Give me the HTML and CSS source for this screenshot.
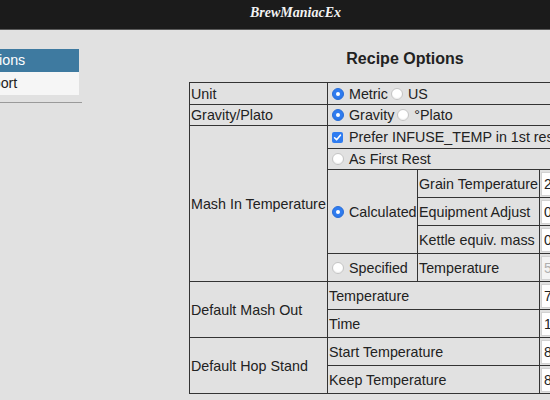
FILE: index.html
```html
<!DOCTYPE html>
<html>
<head>
<meta charset="utf-8">
<link rel="stylesheet" href="styles.css">
</head>
<body>
<header class="topbar"><span class="brand">BrewManiacEx</span></header>
<div class="main">
  <nav class="sidebar">
    <div class="menu-item active">Options</div>
    <div class="menu-item">Export</div>
  </nav>
  <section class="content">
    <h2 class="title">Recipe Options</h2>
    <table class="opts">
      <colgroup><col class="c1"><col class="c2"><col class="c3"><col class="c4"></colgroup>
      <tr class="t1"><td>Unit</td><td colspan="3"><span class="radio on"></span>Metric<span class="radio"></span>US</td></tr>
      <tr class="t2"><td>Gravity/Plato</td><td colspan="3"><span class="radio on"></span>Gravity<span class="radio"></span>°Plato</td></tr>
      <tr class="t3"><td rowspan="6">Mash In Temperature</td><td colspan="3"><span class="check"><svg viewBox="0 0 11 11" width="11" height="11"><path d="M2.6 5.8 L4.6 7.8 L8.4 3.2" fill="none" stroke="#fff" stroke-width="1.6" stroke-linecap="round" stroke-linejoin="round"/></svg></span>Prefer INFUSE_TEMP in 1st rest</td></tr>
      <tr class="t4"><td colspan="3"><span class="radio"></span>As First Rest</td></tr>
      <tr class="r"><td rowspan="3"><span class="radio on"></span>Calculated</td><td>Grain Temperature</td><td class="in"><input class="num" value="20"></td></tr>
      <tr class="r"><td>Equipment Adjust</td><td class="in"><input class="num" value="0"></td></tr>
      <tr class="r"><td>Kettle equiv. mass</td><td class="in"><input class="num" value="0"></td></tr>
      <tr class="r"><td><span class="radio"></span>Specified</td><td>Temperature</td><td class="in"><input class="num" value="52" disabled></td></tr>
      <tr class="r"><td rowspan="2">Default Mash Out</td><td colspan="2">Temperature</td><td class="in"><input class="num" value="76"></td></tr>
      <tr class="r"><td colspan="2">Time</td><td class="in"><input class="num" value="10"></td></tr>
      <tr class="r"><td rowspan="2">Default Hop Stand</td><td colspan="2">Start Temperature</td><td class="in"><input class="num" value="85"></td></tr>
      <tr class="r"><td colspan="2">Keep Temperature</td><td class="in"><input class="num" value="80"></td></tr>
    </table>
  </section>
</div>
</body>
</html>
```
FILE: styles.css
```css
html, body {
  margin: 0;
  padding: 0;
  overflow: hidden;
  background: #e1e1e1;
  font-family: "Liberation Sans", Arial, sans-serif;
  color: #222;
}
.topbar {
  height: 29px;
  background: #1b1b1b;
  border-bottom: 1px solid #5a5a5a;
  box-sizing: content-box;
  padding-left: 250px;
  display: flex;
  align-items: center;
}
.brand {
  font-family: "Liberation Serif", "Times New Roman", serif;
  font-style: italic;
  font-weight: bold;
  font-size: 14px;
  color: #f2f2f2;
  margin-top: -3px;
}
.main {
  display: flex;
  align-items: flex-start;
}
.sidebar {
  flex: none;
  margin-left: -32px;
  margin-top: 19px;
  width: 114px;
  border-bottom: 1px solid #9a9a9a;
  padding-bottom: 7px;
}
.menu-item {
  width: 111px;
  box-sizing: border-box;
  padding-left: 8px;
  font-size: 14.3px;
  background: #f6f6f6;
  height: 23px;
  line-height: 23px;
  color: #222;
}
.menu-item.active {
  background: #3e7aa0;
  color: #fff;
}
.content {
  margin-left: 107px;
  width: 432px;
  flex: none;
}
.title {
  margin: 19px 0 0;
  height: 20px;
  font-size: 16px;
  font-weight: bold;
  text-align: center;
  color: #222;
  line-height: 20px;
}
.opts {
  margin-top: 13px;
  border-collapse: collapse;
  table-layout: fixed;
  width: 432px;
  font-size: 14.3px;
}
.c1 { width: 138px; }
.c2 { width: 90px; }
.c3 { width: 122px; }
.c4 { width: 82px; }
.opts td {
  border: 1px solid #333;
  padding: 0 1px;
  white-space: nowrap;
  vertical-align: middle;
  line-height: 16px;
}
.opts tr.t1 td { height: 21px; }
.opts tr.t2 td { height: 20px; }
.opts tr.t3 td { height: 22px; }
.opts tr.t4 td { height: 20px; }
.opts tr.r td { height: 27px; }
.opts td.in { padding: 0 1px; }
.radio {
  display: inline-block;
  width: 12px;
  height: 12px;
  box-sizing: border-box;
  border-radius: 50%;
  background: #fff;
  border: 1px solid #c4c4c4;
  box-shadow: inset 0 -1px 1px rgba(0,0,0,0.06);
  vertical-align: -1px;
  margin: 0 5px 0 3px;
  position: relative;
}
.radio.on {
  background: #2f7cf0;
  border-color: #2a6fd8;
}
.radio.on::after {
  content: "";
  position: absolute;
  left: 3px;
  top: 3px;
  width: 4px;
  height: 4px;
  border-radius: 50%;
  background: #fff;
}
.check {
  display: inline-block;
  width: 11px;
  height: 11px;
  border-radius: 2px;
  background: #2f7cf0;
  vertical-align: -1px;
  margin: 0 6px 0 3px;
}
.check svg { display: block; }
.num {
  display: block;
  width: 100%;
  box-sizing: border-box;
  height: 24px;
  border: 1px solid #d2d2d2;
  background: #fff;
  font-family: "Liberation Sans", Arial, sans-serif;
  font-size: 14px;
  color: #222;
  padding: 0 2px;
  margin: 0;
}
.num:disabled {
  color: #b0b0b0;
  background: #f4f4f4;
}
```
